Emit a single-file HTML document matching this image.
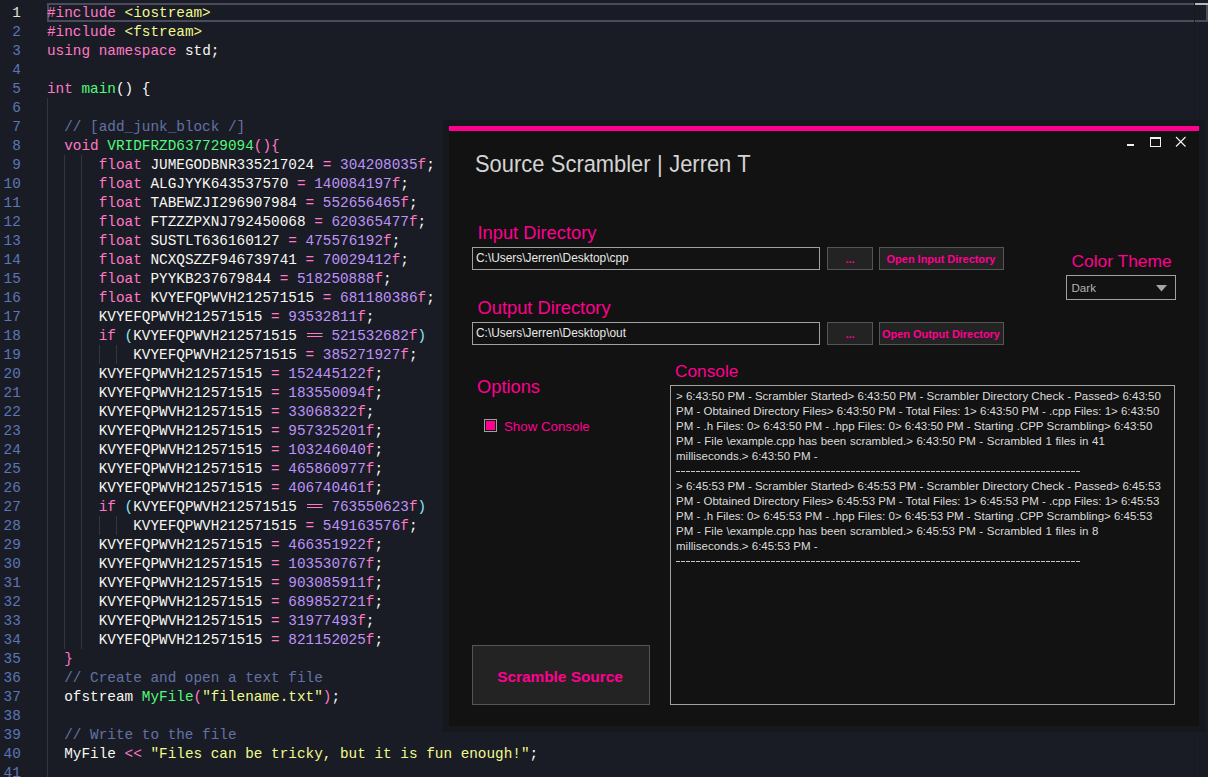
<!DOCTYPE html>
<html><head><meta charset="utf-8">
<style>
*{margin:0;padding:0;box-sizing:border-box}
html,body{width:1208px;height:777px;overflow:hidden;background:#1a1c25}
body{position:relative;font-family:"Liberation Sans",sans-serif}
.ab{position:absolute}
#code{position:absolute;left:47px;top:4px;font-family:"Liberation Mono",monospace;font-size:14.37px;line-height:19px;color:#f8f8f2;white-space:pre}
#nums{position:absolute;left:0;top:4px;width:20.8px;text-align:right;font-family:"Liberation Mono",monospace;font-size:14.37px;line-height:19px;color:#5a76b8;white-space:pre}
.k{color:#ff79c6}.g{color:#50fa7b}.y{color:#f1fa8c}.p{color:#bd93f9}.c{color:#6272a4}.cy{color:#8be9fd}.w{color:#f8f8f2}
.eq{display:inline-block;vertical-align:top;height:19px;background:linear-gradient(#ff79c6,#ff79c6) 1px 5.6px/15.5px 1.4px no-repeat,linear-gradient(#ff79c6,#ff79c6) 1px 9.3px/15.5px 1.4px no-repeat}
.guide{position:absolute;width:1px;background:#33353f}
#curline{position:absolute;left:47px;top:3px;width:1147px;height:19px;border:2px solid #4a4c5e;border-right:none}
#curline2{position:absolute;left:1195px;top:3px;width:13px;height:19px;border:2px solid #4a4c5e;border-left:none}
#win{position:absolute;left:449px;top:126px;width:750px;height:600px;background:#121212;border-top:5px solid #ff0090}
#shadow{position:absolute;left:443px;top:120px;width:762px;height:612px;background:#16181e}
.pink{color:#ff0090}
.lbl{position:absolute;white-space:nowrap;color:#ff0090}
.tb{position:absolute;border:1px solid #a0a0a0;background:#121212;color:#e8e8e8;font-size:11.9px;white-space:nowrap;padding-left:3px;line-height:21px}
.btn{position:absolute;border:1px solid #555;background:#232323;color:#ff0090;font-weight:bold;text-align:center;white-space:nowrap}
#console{position:absolute;left:670px;top:385px;width:505px;height:320px;border:1px solid #a0a0a0;background:#121212}
#ctext{position:absolute;left:676px;top:389.3px;color:#dcdcdc;font-size:11.5px;line-height:15px;white-space:pre}
</style></head><body>
<div id="nums"><span style="color:#e0e0e0">1</span>
2
3
4
5
6
7
8
9
10
11
12
13
14
15
16
17
18
19
20
21
22
23
24
25
26
27
28
29
30
31
32
33
34
35
36
37
38
39
40
41</div>
<div id="curline"></div><div id="curline2"></div><div class="ab" style="left:1194px;top:0;width:1px;height:777px;background:#18191f"></div><div class="ab" style="left:1195px;top:3px;width:13px;height:2px;background:#b8b8b8"></div>
<div id="code"><span class="k">#include</span> <span class="y">&lt;iostream&gt;</span>
<span class="k">#include</span> <span class="y">&lt;fstream&gt;</span>
<span class="k">using</span> <span class="k">namespace</span> std;

<span class="k">int</span> <span class="g">main</span>() {

  <span class="c">// [add_junk_block /]</span>
  <span class="k">void</span> <span class="g">VRIDFRZD637729094</span><span class="k">(){</span>
      <span class="k">float</span> JUMEGODBNR335217024 <span class="k">=</span> <span class="p">304208035</span><span class="k">f</span>;
      <span class="k">float</span> ALGJYYK643537570 <span class="k">=</span> <span class="p">140084197</span><span class="k">f</span>;
      <span class="k">float</span> TABEWZJI296907984 <span class="k">=</span> <span class="p">552656465</span><span class="k">f</span>;
      <span class="k">float</span> FTZZZPXNJ792450068 <span class="k">=</span> <span class="p">620365477</span><span class="k">f</span>;
      <span class="k">float</span> SUSTLT636160127 <span class="k">=</span> <span class="p">475576192</span><span class="k">f</span>;
      <span class="k">float</span> NCXQSZZF946739741 <span class="k">=</span> <span class="p">70029412</span><span class="k">f</span>;
      <span class="k">float</span> PYYKB237679844 <span class="k">=</span> <span class="p">518250888</span><span class="k">f</span>;
      <span class="k">float</span> KVYEFQPWVH212571515 <span class="k">=</span> <span class="p">681180386</span><span class="k">f</span>;
      KVYEFQPWVH212571515 <span class="k">=</span> <span class="p">93532811</span><span class="k">f</span>;
      <span class="k">if</span> <span class="cy">(</span>KVYEFQPWVH212571515 <span class="eq">  </span> <span class="p">521532682</span><span class="k">f</span><span class="cy">)</span>
          KVYEFQPWVH212571515 <span class="k">=</span> <span class="p">385271927</span><span class="k">f</span>;
      KVYEFQPWVH212571515 <span class="k">=</span> <span class="p">152445122</span><span class="k">f</span>;
      KVYEFQPWVH212571515 <span class="k">=</span> <span class="p">183550094</span><span class="k">f</span>;
      KVYEFQPWVH212571515 <span class="k">=</span> <span class="p">33068322</span><span class="k">f</span>;
      KVYEFQPWVH212571515 <span class="k">=</span> <span class="p">957325201</span><span class="k">f</span>;
      KVYEFQPWVH212571515 <span class="k">=</span> <span class="p">103246040</span><span class="k">f</span>;
      KVYEFQPWVH212571515 <span class="k">=</span> <span class="p">465860977</span><span class="k">f</span>;
      KVYEFQPWVH212571515 <span class="k">=</span> <span class="p">406740461</span><span class="k">f</span>;
      <span class="k">if</span> <span class="cy">(</span>KVYEFQPWVH212571515 <span class="eq">  </span> <span class="p">763550623</span><span class="k">f</span><span class="cy">)</span>
          KVYEFQPWVH212571515 <span class="k">=</span> <span class="p">549163576</span><span class="k">f</span>;
      KVYEFQPWVH212571515 <span class="k">=</span> <span class="p">466351922</span><span class="k">f</span>;
      KVYEFQPWVH212571515 <span class="k">=</span> <span class="p">103530767</span><span class="k">f</span>;
      KVYEFQPWVH212571515 <span class="k">=</span> <span class="p">903085911</span><span class="k">f</span>;
      KVYEFQPWVH212571515 <span class="k">=</span> <span class="p">689852721</span><span class="k">f</span>;
      KVYEFQPWVH212571515 <span class="k">=</span> <span class="p">31977493</span><span class="k">f</span>;
      KVYEFQPWVH212571515 <span class="k">=</span> <span class="p">821152025</span><span class="k">f</span>;
  <span class="k">}</span>
  <span class="c">// Create and open a text file</span>
  ofstream <span class="g">MyFile</span><span class="k">(</span><span class="y">"filename.txt"</span><span class="k">)</span>;

  <span class="c">// Write to the file</span>
  MyFile <span class="k">&lt;&lt;</span> <span class="y">"Files can be tricky, but it is fun enough!"</span>;
</div>

<div class="guide" style="left:47px;top:98px;height:679px"></div>
<div class="guide" style="left:64px;top:155px;height:494px"></div>
<div class="guide" style="left:81px;top:155px;height:494px"></div>
<div class="guide" style="left:99px;top:345px;height:19px"></div>
<div class="guide" style="left:116px;top:345px;height:19px"></div>
<div class="guide" style="left:99px;top:516px;height:19px"></div>
<div class="guide" style="left:116px;top:516px;height:19px"></div>
<div id="shadow"></div>
<div id="win"></div>
<div class="ab" style="left:1127px;top:144px;width:7px;height:2px;background:#f0f0f0"></div>
<div class="ab" style="left:1150px;top:137px;width:11px;height:9.5px;border:1px solid #f0f0f0;border-top-width:2px"></div>
<svg class="ab" style="left:1175px;top:136px" width="12" height="12" viewBox="0 0 12 12"><path d="M1 1L10.5 10.5M10.5 1L1 10.5" stroke="#f4f4f4" stroke-width="1.1"/></svg>
<div class="lbl" style="left:475px;top:152px;font-size:21.9px;color:#d4d4d4;word-spacing:0.4px;transform:scaleY(1.09);transform-origin:0 19.8px">Source Scrambler | Jerren T</div>
<div class="lbl" style="left:477.5px;top:222.3px;font-size:18.3px">Input Directory</div>
<div class="tb" style="left:472px;top:247px;width:348px;height:23px">C:\Users\Jerren\Desktop\cpp</div>
<div class="btn" style="left:827px;top:247px;width:46px;height:23px;font-size:11px;line-height:22px">...</div>
<div class="btn" style="left:879px;top:247px;width:125px;height:23px;font-size:10.95px;line-height:22px;text-indent:-1px">Open Input Directory</div>
<div class="lbl" style="left:477.5px;top:297.3px;font-size:18.3px">Output Directory</div>
<div class="tb" style="left:472px;top:322px;width:348px;height:23px">C:\Users\Jerren\Desktop\out</div>
<div class="btn" style="left:827px;top:322px;width:46px;height:23px;font-size:11px;line-height:22px">...</div>
<div class="btn" style="left:879px;top:322px;width:125px;height:23px;font-size:10.95px;line-height:22px;text-indent:-1px">Open Output Directory</div>
<div class="lbl" style="left:1071.5px;top:251.4px;font-size:17.4px">Color Theme</div>
<div class="tb" style="left:1066px;top:275px;width:110px;height:25px;line-height:24px;padding-left:4.5px;font-size:11.6px;color:#b4b4b4">Dark</div>
<svg class="ab" style="left:1156px;top:285px" width="11" height="6.5" viewBox="0 0 11 6.5"><path d="M0 0H11L5.5 6.5Z" fill="#a4a4a4"/></svg>
<div class="lbl" style="left:477px;top:376.3px;font-size:18.3px">Options</div>
<div class="ab" style="left:484px;top:419px;width:13px;height:13px;border:1px solid #a0a0a0;padding:1px"><div style="width:9px;height:9px;background:#ff0090"></div></div>
<div class="lbl" style="left:504px;top:418.8px;font-size:13.3px">Show Console</div>
<div class="lbl" style="left:675px;top:361.2px;font-size:17.3px">Console</div>
<div id="console"></div>
<div id="ctext">&gt; 6:43:50 PM - Scrambler Started&gt; 6:43:50 PM - Scrambler Directory Check - Passed&gt; 6:43:50
PM - Obtained Directory Files&gt; 6:43:50 PM - Total Files: 1&gt; 6:43:50 PM - .cpp Files: 1&gt; 6:43:50
PM - .h Files: 0&gt; 6:43:50 PM - .hpp Files: 0&gt; 6:43:50 PM - Starting .CPP Scrambling&gt; 6:43:50
<span style="word-spacing:0.43px">PM - File \example.cpp has been scrambled.&gt; 6:43:50 PM - Scrambled 1 files in 41</span>
milliseconds.&gt; 6:43:50 PM -

&gt; 6:45:53 PM - Scrambler Started&gt; 6:45:53 PM - Scrambler Directory Check - Passed&gt; 6:45:53
PM - Obtained Directory Files&gt; 6:45:53 PM - Total Files: 1&gt; 6:45:53 PM - .cpp Files: 1&gt; 6:45:53
PM - .h Files: 0&gt; 6:45:53 PM - .hpp Files: 0&gt; 6:45:53 PM - Starting .CPP Scrambling&gt; 6:45:53
<span style="word-spacing:0.43px">PM - File \example.cpp has been scrambled.&gt; 6:45:53 PM - Scrambled 1 files in 8</span>
milliseconds.&gt; 6:45:53 PM -
</div>
<div class="ab" style="left:676px;top:471px;width:405px;height:1px;background:repeating-linear-gradient(90deg,#c8c8c8 0 4px,transparent 4px 5px)"></div>
<div class="ab" style="left:676px;top:561px;width:405px;height:1px;background:repeating-linear-gradient(90deg,#c8c8c8 0 4px,transparent 4px 5px)"></div>
<div class="btn" style="left:472px;top:645px;width:178px;height:60px;font-size:15.4px;line-height:62px;text-indent:-2px">Scramble Source</div>
</body></html>
